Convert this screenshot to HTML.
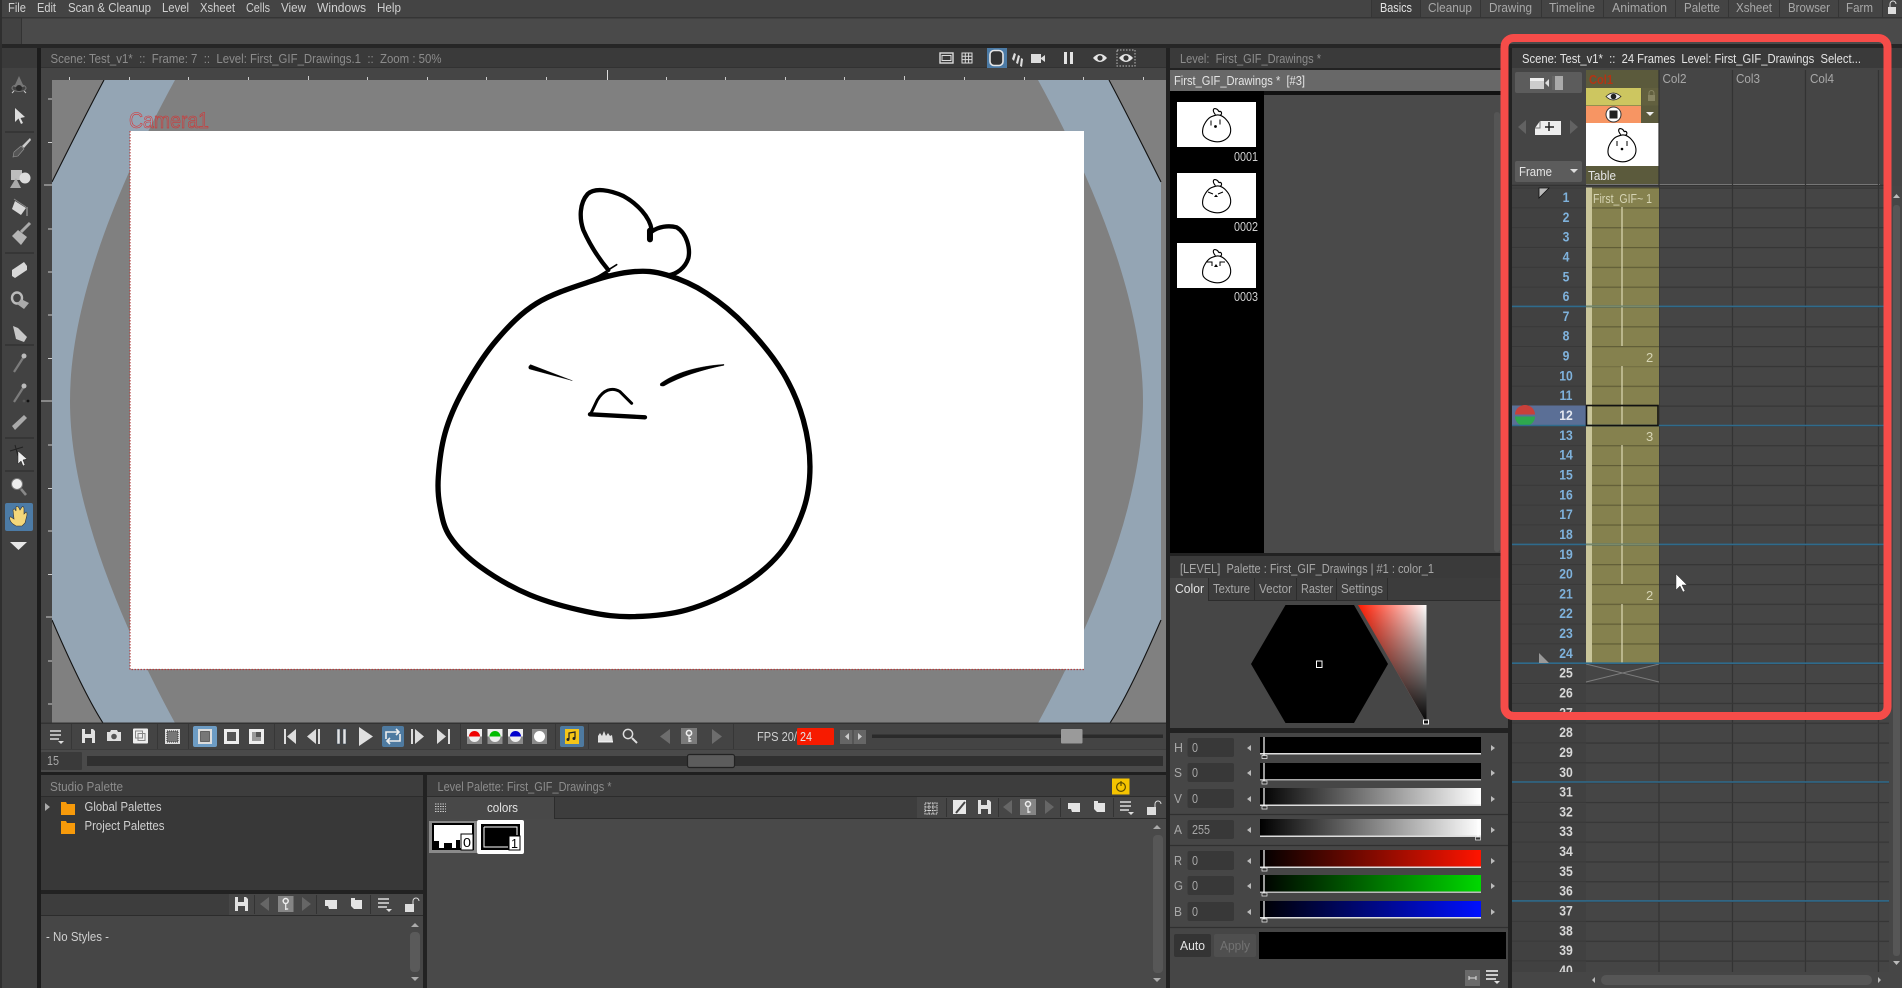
<!DOCTYPE html>
<html><head><meta charset="utf-8"><title>OpenToonz</title>
<style>
html,body{margin:0;padding:0;background:#464646;width:1902px;height:988px;overflow:hidden}
svg{display:block;position:absolute;left:0;top:0}
text{font-family:"Liberation Sans",sans-serif;font-size:13px;white-space:pre}
.m{fill:#d0d0d0}.d{fill:#8c8c8c}.w{fill:#e4e4e4}.t{fill:#a8a8a8}
.nb{font-weight:bold;fill:#7fb2dc;font-size:14px;text-anchor:middle}
.nw{font-weight:bold;fill:#d8d8d8;font-size:14px;text-anchor:middle}
.i{fill:#e2e2e2}.s{fill:none;stroke:#e2e2e2;stroke-width:1.6}
</style></head><body>
<svg width="1902" height="988" viewBox="0 0 1902 988" xmlns="http://www.w3.org/2000/svg">
<defs>
<pattern id="rows" x="1586" y="187.5" width="20" height="19.82" patternUnits="userSpaceOnUse"><rect width="20" height="1.2" fill="#353535"/></pattern>
<pattern id="rowsC" x="1586" y="187.5" width="20" height="19.82" patternUnits="userSpaceOnUse"><rect width="20" height="1.2" fill="#5f5c36"/></pattern>
<pattern id="rowsN" x="1512" y="187.5" width="20" height="19.82" patternUnits="userSpaceOnUse"><rect width="20" height="1" fill="#383838"/></pattern>
<linearGradient id="gw"><stop offset="0" stop-color="#000"/><stop offset="1" stop-color="#fff"/></linearGradient>
<linearGradient id="gr"><stop offset="0" stop-color="#000"/><stop offset="1" stop-color="#ff1400"/></linearGradient>
<linearGradient id="gg"><stop offset="0" stop-color="#000"/><stop offset="1" stop-color="#00d800"/></linearGradient>
<linearGradient id="gb"><stop offset="0" stop-color="#000"/><stop offset="1" stop-color="#0010ff"/></linearGradient>
<linearGradient id="tr"><stop offset="0" stop-color="#ff1a00"/><stop offset="1" stop-color="#fff"/></linearGradient>
<linearGradient id="tb" x1="0" y1="0" x2="0" y2="1"><stop offset="0" stop-color="#000" stop-opacity="0"/><stop offset="1" stop-color="#000"/></linearGradient>
<clipPath id="cv"><rect x="52" y="80" width="1114" height="643"/></clipPath>
<path id="body" d="M510 335 C558 319 602 308 640 305 C678 302 703 304 740 315 C777 326 820 344 860 370 C900 396 942 430 980 470 C1018 510 1062 563 1090 610 C1118 657 1137 703 1150 750 C1163 797 1170 845 1170 890 C1170 935 1165 977 1150 1020 C1135 1063 1112 1112 1080 1150 C1048 1188 1007 1222 960 1250 C913 1278 853 1305 800 1320 C747 1335 690 1339 640 1340 C590 1341 552 1336 500 1325 C448 1314 383 1297 330 1275 C277 1253 220 1219 180 1190 C140 1161 110 1130 90 1100 C70 1070 66 1040 60 1010 C54 980 52.5 957 55 920 C57.5 883 63 833 75 790 C87 747 104 707 130 660 C156 613 193 553 230 510 C267 467 303 429 350 400 C397 371 462 351 510 335 Z"/>
<path id="tuft" d="M565 300 C540 270 510 225 490 180 C478 145 478 100 503 72 C525 52 570 60 610 78 C650 100 690 140 695 180 M695 185 C715 170 745 165 770 172 C800 190 812 235 805 265 C795 295 770 312 745 316"/>
<path id="band" d="M104 80 L175 80 C120 180 70 300 70 401 C70 502 120 622 175 723 L103 723 C85 695 65 650 52 620 L52 182 C68 150 88 110 104 80 Z"/>
<path id="bline" d="M104 80 C88 110 68 150 52 182 M52 620 C65 650 85 695 103 723"/>
<g id="egg1" fill="none" stroke="#000" stroke-width="44" transform="translate(1201.2,107) scale(.0252,.026)"><use href="#body"/><use href="#tuft"/></g>
<path id="floppy" d="M-6 -7 H5 L7 -5 V7 H-6 Z M-3 -7 V-2 H3 V-7 Z M-3 2 V7 H4 V2 Z" fill-rule="evenodd"/>
</defs>

<!-- base -->
<rect width="1902" height="988" fill="#464646"/>
<rect y="0" width="1902" height="17" fill="#444"/>
<rect y="17" width="1902" height="1.5" fill="#353535"/>
<rect y="18.5" width="1902" height="25.5" fill="#4a4a4a"/>
<rect x="2" y="18.5" width="19" height="25.5" fill="#424242"/>
<rect y="44" width="1902" height="4" fill="#262626"/>
<rect x="0" y="0" width="2" height="988" fill="#2f2f2f"/>
<rect x="21" y="18" width="1" height="26" fill="#333"/>

<!-- menu -->
<text class="m" x="8" y="12" textLength="18" lengthAdjust="spacingAndGlyphs">File</text>
<text class="m" x="37" y="12" textLength="19" lengthAdjust="spacingAndGlyphs">Edit</text>
<text class="m" x="68" y="12" textLength="83" lengthAdjust="spacingAndGlyphs">Scan &amp; Cleanup</text>
<text class="m" x="162" y="12" textLength="27" lengthAdjust="spacingAndGlyphs">Level</text>
<text class="m" x="200" y="12" textLength="35" lengthAdjust="spacingAndGlyphs">Xsheet</text>
<text class="m" x="246" y="12" textLength="24" lengthAdjust="spacingAndGlyphs">Cells</text>
<text class="m" x="281" y="12" textLength="25" lengthAdjust="spacingAndGlyphs">View</text>
<text class="m" x="317" y="12" textLength="49" lengthAdjust="spacingAndGlyphs">Windows</text>
<text class="m" x="377" y="12" textLength="24" lengthAdjust="spacingAndGlyphs">Help</text>

<!-- workspace tabs -->
<rect x="1372" y="0" width="48" height="17" fill="#3d3d3d"/>
<path d="M1371.5 0V17M1420.5 0V17M1480.5 0V17M1541.5 0V17M1603.5 0V17M1675.5 0V17M1728.5 0V17M1779.5 0V17M1838.5 0V17M1882.5 0V17" stroke="#353535"/>
<text class="w" x="1380" y="12" textLength="32" lengthAdjust="spacingAndGlyphs">Basics</text>
<text class="t" x="1428" y="12" textLength="44" lengthAdjust="spacingAndGlyphs">Cleanup</text>
<text class="t" x="1489" y="12" textLength="43" lengthAdjust="spacingAndGlyphs">Drawing</text>
<text class="t" x="1549" y="12" textLength="46" lengthAdjust="spacingAndGlyphs">Timeline</text>
<text class="t" x="1612" y="12" textLength="55" lengthAdjust="spacingAndGlyphs">Animation</text>
<text class="t" x="1684" y="12" textLength="36" lengthAdjust="spacingAndGlyphs">Palette</text>
<text class="t" x="1736" y="12" textLength="36" lengthAdjust="spacingAndGlyphs">Xsheet</text>
<text class="t" x="1788" y="12" textLength="42" lengthAdjust="spacingAndGlyphs">Browser</text>
<text class="t" x="1846" y="12" textLength="27" lengthAdjust="spacingAndGlyphs">Farm</text>
<rect x="1888" y="7" width="8" height="7" fill="#ddd"/><path d="M1890 7V4a3 3 0 0 1 6 0" fill="none" stroke="#ddd"/>

<!-- left toolbar -->
<rect x="2" y="48" width="35" height="940" fill="#424242"/>
<rect x="37" y="48" width="4" height="940" fill="#1c1c1c"/>
<rect x="2" y="48" width="35" height="20" fill="#3a3a3a"/>
<path d="M5 132H34M5 253H34M5 345H34M5 438H34M5 471H34" stroke="#333" stroke-width="1.5"/>
<g>
<path d="M19 76 L14 87 H24 Z" fill="#777"/><ellipse cx="19" cy="88" rx="7" ry="3.5" fill="none" stroke="#777"/><circle cx="19" cy="88" r="3" fill="#2a2a2a"/><path d="M12 93l2-2M26 93l-2-2" stroke="#ccc"/>
<path d="M15 108 L15 122 L18.5 118.5 L21 124 L23 123 L20.5 118 L25 117 Z" fill="#ddd"/>
<path d="M30 138 L22 146 L24 148 L31 140 Z" fill="#ccc"/><path d="M21 146 L14 152 L13 157 L18 156 L24 149 Z" fill="#555" stroke="#999" stroke-width=".6"/>
<rect x="11" y="170" width="11" height="10" fill="#bdbdbd"/><circle cx="25" cy="178" r="5.5" fill="#dcdcdc"/><path d="M10 188 L16 178 L21 188 Z" fill="#aaa"/>
<path d="M15 201 L26 208 L21 215 L12 209 Z" fill="#d8d8d8"/><path d="M14 199 L26 207" stroke="#888"/><path d="M27 207 V216" stroke="#777" stroke-width="2"/>
<path d="M12 236 L21 245 L27 237 L18 230 Z" fill="#b5b5b5"/><path d="M21 232 L30 223" stroke="#aaa" stroke-width="3"/>
<path d="M12 270 L24 262 L27 266 L27 270 L15 278 L12 276 Z" fill="#d8d8d8"/>
<ellipse cx="17" cy="298" rx="5" ry="5.5" fill="none" stroke="#bbb" stroke-width="2.4"/><path d="M21 299 L29 303 L24 309 L17 304 Z" fill="#aaa"/>
<path d="M13 326 L18 328 L27 337 L24 342 L16 339 Z" fill="#c8c8c8"/>
<path d="M14 372 L23 358" stroke="#7c7c7c" stroke-width="2.2"/><circle cx="24" cy="356" r="2.5" fill="#bbb"/>
<path d="M14 402 L23 388" stroke="#7c7c7c" stroke-width="2.2"/><circle cx="24" cy="386" r="2.5" fill="#bbb"/><circle cx="24" cy="401" r="1.4" fill="#555"/><circle cx="28" cy="401" r="1.4" fill="#111"/>
<path d="M12 426 L24 415 L27 418 L15 430 Z" fill="#aaa"/>
<path d="M10 451 L23 447 M15 445 L18 456" stroke="#222" stroke-width="1"/><path d="M18 451 L18 464 L21 461 L23 466 L25 465 L23 460 L27 459 Z" fill="#eee" stroke="#222" stroke-width=".5"/>
<circle cx="17" cy="484" r="5.5" fill="#eee" stroke="#777"/><path d="M21 489 L26 495" stroke="#888" stroke-width="2.6"/>
<rect x="5" y="503" width="28" height="28" rx="2" fill="#4c7ba6"/>
<path d="M13 524 C9 521 9 516 11 517 L14 519 L13 510 C14 508 15 509 16 511 L16 507 C17 506 18 506 19 508 L20 510 L22 507 C23 506 24 507 24 509 L24 514 L26 512 C27 512 27 513 27 515 L25 523 L22 526 H16 Z" fill="#f3d77a" stroke="#333" stroke-width=".6"/>
<path d="M10 542 H27 L18.5 550 Z" fill="#e8e8e8"/>
</g>

<!-- viewer -->
<rect x="41" y="48" width="1125" height="20" fill="#3a3a3a"/>
<rect x="41" y="67.5" width="1125" height="1" fill="#2a2a2a"/>
<rect x="41" y="68" width="1125" height="12" fill="#454545"/>
<rect x="41" y="80" width="11" height="643" fill="#454545"/>
<text class="d" x="50.5" y="63" textLength="391" lengthAdjust="spacingAndGlyphs">Scene: Test_v1*  ::  Frame: 7  ::  Level: First_GIF_Drawings.1  ::  Zoom : 50%</text>
<path d="M69.5 77V80M129.5 77V80M188.5 77V80M248.5 77V80M308.5 76V80M367.5 77V80M427.5 77V80M486.5 77V80M546.5 77V80M666.5 77V80M725.5 77V80M785.5 77V80M844.5 77V80M904.5 76V80M964.5 77V80M1024.5 77V80M1083.5 77V80M1143.5 77V80" stroke="#ccc"/>
<path d="M607.5 70V80" stroke="#ddd"/>
<path d="M48 99H52M48 142.5H52M44 185H52M48 229H52M48 272H52M48 315H52M48 358.5H52M41 401H52M48 445H52M48 488.5H52M48 531H52M48 574.5H52M46 617H52M48 661H52M48 704H52" stroke="#ccc"/>
<rect x="52" y="80" width="1114" height="643" fill="#808080"/>
<g clip-path="url(#cv)">
<use href="#band" fill="#94a5b4"/>
<use href="#band" fill="#94a5b4" transform="matrix(-1 0 0 1 1213 0)"/>
<use href="#bline" fill="none" stroke="#111" stroke-width="1.1"/>
<use href="#bline" fill="none" stroke="#111" stroke-width="1.1" transform="matrix(-1 0 0 1 1213 0)"/>
</g>
<rect x="130" y="131" width="954" height="538" fill="#fff"/>
<path d="M130 131V669.5H1084" fill="none" stroke="#b3403f" stroke-width="1.2" stroke-dasharray="1.5 1.5"/>
<text x="129" y="128" textLength="80" lengthAdjust="spacingAndGlyphs" fill="none" stroke="#e02a2a" stroke-width=".55" style="font-size:22px">Camera1</text>
<g transform="translate(420,170) scale(.3333)" fill="none" stroke="#000" stroke-linecap="round" stroke-linejoin="round">
<use href="#body" stroke-width="16"/>
<use href="#tuft" stroke-width="13"/>
<path d="M690 182 L690 208" stroke-width="18"/>
<path d="M512 333 L590 284" stroke-width="5"/>
<path d="M512 333 L560 312" stroke-width="13"/>
<path d="M332 584 L457 632 L328 597 Q322 590 332 584Z" fill="#000" stroke-width="1"/>
<path d="M722 640 C770 605 840 588 912 583 L912 586 C850 598 780 620 732 648 Q716 650 722 640 Z" fill="#000" stroke-width="1"/>
<path d="M512 732 L532 690 C550 660 575 650 600 665 L635 700" stroke-width="9"/>
<path d="M510 733 L675 742" stroke-width="13"/>
</g>
<!-- viewer title icons -->
<g>
<rect x="987" y="48" width="20" height="20" fill="#4c7ba6"/>
<rect x="940" y="53" width="13" height="10" fill="none" stroke="#ddd" stroke-width="1.4"/><rect x="942" y="55.5" width="9" height="5" fill="none" stroke="#ddd"/>
<path d="M962 53h10v10h-10zM965.3 53v10M968.6 53v10M962 56.3h10M962 59.6h10" fill="none" stroke="#ddd"/>
<rect x="990" y="50.5" width="13" height="15" rx="4" fill="#333" stroke="#e6e6e6" stroke-width="1.6"/>
<path d="M1012 59l2-6 2 1-2 7zM1016 63l2-8 2 1-2 8zM1020 66l1-8 2 1-1 8z" fill="#ddd"/>
<rect x="1031" y="54" width="10" height="9" fill="#ddd"/><path d="M1041 58l4-3v7l-4-3z" fill="#ddd"/>
<rect x="1064" y="52" width="3" height="12" fill="#e4e4e4"/><rect x="1070" y="52" width="3" height="12" fill="#e4e4e4"/>
<path d="M1093 58q7-8 14 0q-7 8-14 0z" fill="#e4e4e4"/><circle cx="1100" cy="58" r="2.6" fill="#333"/>
<rect x="1117" y="50" width="18" height="16" fill="none" stroke="#bbb" stroke-dasharray="1.5 1.5"/>
<path d="M1119 58q7-8 14 0q-7 8-14 0z" fill="#e4e4e4"/><circle cx="1126" cy="58" r="2.6" fill="#333"/>
</g>

<!-- playback bar -->
<rect x="41" y="723" width="1125" height="27" fill="#444"/>
<rect x="41" y="722.5" width="1125" height="1.5" fill="#333"/>
<rect x="41" y="749.5" width="1125" height="1" fill="#333"/>
<rect x="41" y="750" width="1125" height="22" fill="#4a4a4a"/>
<rect x="41" y="772" width="1125" height="3.5" fill="#1f1f1f"/>
<path d="M71.5 724V749M157.5 724V749M188.5 724V749M274.5 724V749M460.5 724V749M555.5 724V749M588.5 724V749M733.5 724V749" stroke="#373737"/>
<g>
<path d="M50 731h11M50 735h11M50 739h9" stroke="#ddd" stroke-width="1.6"/><path d="M58 741h6l-3 3z" fill="#ddd"/>
<use href="#floppy" class="i" transform="translate(88,736)"/>
<path d="M107 732h3l1-2h6l1 2h3v9h-14z" fill="#e0e0e0"/><circle cx="114" cy="736.5" r="2.8" fill="#555"/>
<rect x="133" y="728.5" width="15" height="15" rx="1" fill="#eee"/><rect x="135.5" y="731" width="7" height="7" fill="none" stroke="#888"/><rect x="138" y="733.5" width="7" height="7" fill="none" stroke="#888"/>
<rect x="165" y="729" width="15" height="15" fill="#ddd"/><rect x="167" y="731" width="11" height="11" fill="#777" stroke="#333" stroke-dasharray="1 1"/>
<rect x="193" y="726" width="24" height="21" rx="2" fill="#6d9cc4"/><rect x="198" y="729" width="14" height="15" fill="#ddd"/><rect x="200.5" y="731.5" width="9" height="10" fill="#777" stroke="#333" stroke-width=".6"/>
<rect x="224" y="729" width="15" height="15" fill="#eee"/><rect x="227" y="732" width="9" height="9" fill="#555"/>
<rect x="249" y="729" width="15" height="15" fill="#eee"/><rect x="252" y="732" width="9" height="9" fill="#999"/><rect x="256" y="732" width="5" height="5" fill="#555"/>
<path d="M284 729h2v15h-2zM296 729v15l-9-7.5z" fill="#ddd"/>
<path d="M320 729v15h-2v-15zM316 729v15l-9-7.5z" fill="#ddd"/>
<rect x="337" y="729" width="3" height="15" fill="#e4e4e4" stroke="#345" stroke-width=".5"/><rect x="343" y="729" width="3" height="15" fill="#e4e4e4" stroke="#345" stroke-width=".5"/>
<path d="M359 727v19l14-9.5z" fill="#e0e0e0"/>
<rect x="382" y="726" width="22" height="21" rx="2" fill="#4e7aa0"/>
<path d="M386 739v-7h12M396 729l3 3-3 3M400 734v7h-12M390 744l-3-3 3-3" fill="none" stroke="#eee" stroke-width="1.6"/>
<path d="M411 729h2v15h-2zM415 729v15l9-7.5z" fill="#ddd"/>
<path d="M437 729v15l9-7.5zM448 729h2v15h-2z" fill="#ddd"/>
<rect x="467" y="729" width="15" height="15" fill="#8a8a8a"/><rect x="467" y="729" width="15" height="7.5" fill="#eee"/><path d="M469 736.5a5.5 5.5 0 0 1 11 0z" fill="#e00"/><path d="M469 736.5a5.5 5.5 0 0 0 11 0z" fill="#eee"/>
<rect x="487.5" y="729" width="15" height="15" fill="#8a8a8a"/><rect x="487.5" y="729" width="15" height="7.5" fill="#eee"/><path d="M489.5 736.5a5.5 5.5 0 0 1 11 0z" fill="#0b0"/><path d="M489.5 736.5a5.5 5.5 0 0 0 11 0z" fill="#eee"/>
<rect x="508" y="729" width="15" height="15" fill="#8a8a8a"/><rect x="508" y="729" width="15" height="7.5" fill="#eee"/><path d="M510 736.5a5.5 5.5 0 0 1 11 0z" fill="#00c"/><path d="M510 736.5a5.5 5.5 0 0 0 11 0z" fill="#eee"/>
<rect x="532" y="729" width="15" height="15" fill="#8a8a8a"/><circle cx="539.5" cy="736.5" r="5.5" fill="#fff"/>
<rect x="560" y="726" width="24" height="21" rx="2" fill="#4e7aa0"/><rect x="565" y="729" width="14" height="15" fill="#f5c518"/>
<path d="M569 739v-6l6-1v6" fill="none" stroke="#222" stroke-width="1.2"/><circle cx="568" cy="739.5" r="1.5" fill="#222"/><circle cx="574" cy="738.5" r="1.5" fill="#222"/>
<path d="M598 742V736l2-3 2 3 2-5 2 5 2-3 2 3 2-1 1 7z" fill="#e0e0e0"/><rect x="598" y="741" width="15" height="1.5" fill="#eee"/>
<circle cx="628" cy="734" r="4.6" fill="none" stroke="#ddd" stroke-width="1.5"/><path d="M632 738l5 5" stroke="#ddd" stroke-width="2"/>
<path d="M670 729v15l-10-7.5z" fill="#6d6d6d"/>
<rect x="681" y="728" width="16" height="16" fill="#7a7a7a"/><circle cx="689" cy="733" r="2.6" fill="none" stroke="#eee" stroke-width="1.6"/><path d="M689 735.5V742M689 741h2.5M689 738.5h2" stroke="#eee" stroke-width="1.2"/>
<path d="M712 729v15l10-7.5z" fill="#6d6d6d"/>
<text class="m" x="757" y="741" textLength="40" lengthAdjust="spacingAndGlyphs">FPS 20/</text>
<rect x="797" y="728" width="37" height="17" rx="1" fill="#f71b00"/>
<text class="w" x="800" y="741" textLength="12" lengthAdjust="spacingAndGlyphs">24</text>
<rect x="840" y="730" width="12.5" height="14" fill="#666"/><rect x="853.5" y="730" width="12.5" height="14" fill="#666"/>
<path d="M849 733v7l-4-3.5zM858 733v7l4-3.5z" fill="#ccc"/>
<rect x="872" y="734.5" width="291" height="3.5" fill="#2a2a2a"/>
<rect x="1061" y="729" width="21.5" height="14.5" rx="1" fill="#9a9a9a"/>
<rect x="41" y="752" width="41" height="18" rx="1" fill="#3a3a3a"/>
<text class="t" x="47" y="765" textLength="12" lengthAdjust="spacingAndGlyphs">15</text>
<rect x="87" y="756" width="1076" height="10" fill="#303030"/>
<rect x="687.5" y="754.5" width="47" height="13" rx="2" fill="#5c5c5c" stroke="#222" stroke-width="1.2"/>
</g>

<!-- Studio palette -->
<rect x="41" y="775" width="382" height="22" fill="#3d3d3d"/>
<rect x="423" y="775" width="4" height="213" fill="#222"/>
<rect x="41" y="796" width="382" height="1" fill="#2c2c2c"/>
<text class="d" x="50" y="791" textLength="73" lengthAdjust="spacingAndGlyphs">Studio Palette</text>
<rect x="41" y="797" width="382" height="93" fill="#383838"/>
<path d="M45 803l5 4-5 4z" fill="#aaa"/>
<path d="M61 802h5l1 2h8v11h-14z" fill="#f79a0a"/>
<path d="M61 821h5l1 2h8v11h-14z" fill="#f79a0a"/>
<text class="m" x="84.5" y="811" textLength="77" lengthAdjust="spacingAndGlyphs">Global Palettes</text>
<text class="m" x="84.5" y="830" textLength="80" lengthAdjust="spacingAndGlyphs">Project Palettes</text>
<rect x="41" y="890" width="382" height="4" fill="#222"/>
<rect x="41" y="894" width="382" height="21" fill="#3d3d3d"/>
<rect x="229" y="894" width="194" height="21" fill="#464646"/>
<path d="M254.5 895V914M316.5 895V914M370.5 895V914" stroke="#333"/>
<rect x="41" y="915" width="382" height="1" fill="#2c2c2c"/>
<rect x="41" y="916" width="382" height="72" fill="#464646"/>
<g>
<use href="#floppy" class="i" transform="translate(241,904)"/>
<path d="M269 897v14l-9-7z" fill="#666"/>
<rect x="278" y="896" width="15.5" height="16" fill="#858585"/><circle cx="285.7" cy="901" r="2.5" fill="none" stroke="#eee" stroke-width="1.5"/><path d="M285.7 903.5V910M285.7 909h2.5" stroke="#eee" stroke-width="1.2"/>
<path d="M302 897v14l9-7z" fill="#666"/>
<path d="M325 900h12v9h-8l-1-3h-3z" fill="#e4e4e4"/>
<path d="M351 898h4v2h7v9h-8l-3-3z" fill="#e4e4e4"/>
<path d="M378 899h11M378 903h11M378 907h9" stroke="#ddd" stroke-width="1.6"/><path d="M386 909h6l-3 3z" fill="#ddd"/>
<rect x="405" y="904" width="9" height="8" fill="#ddd"/><path d="M413 904v-3a3 3 0 0 1 6 0" fill="none" stroke="#ddd"/>
</g>
<text class="m" x="46" y="941" textLength="63" lengthAdjust="spacingAndGlyphs">- No Styles -</text>
<path d="M411 927l4-4 4 4zM411 977l4 4 4-4z" fill="#aaa"/>
<rect x="410" y="932" width="10" height="40" rx="4" fill="#5a5a5a"/>

<!-- Level palette -->
<rect x="427" y="775" width="739" height="22" fill="#3d3d3d"/>
<rect x="427" y="796" width="739" height="1" fill="#2c2c2c"/>
<text class="d" x="437.5" y="791" textLength="174" lengthAdjust="spacingAndGlyphs">Level Palette: First_GIF_Drawings *</text>
<rect x="1112" y="778.5" width="17.5" height="16" fill="#f5c400"/>
<circle cx="1121" cy="787" r="4.4" fill="none" stroke="#5a4a00" stroke-width="1.2"/><path d="M1121 781v5" stroke="#5a4a00" stroke-width="1.2"/>
<rect x="427" y="797" width="739" height="21" fill="#3d3d3d"/>
<rect x="917" y="797" width="249" height="21" fill="#464646"/>
<rect x="427" y="797" width="127" height="22" fill="#484848"/>
<path d="M554.5 797V818M554 818.5H1166" stroke="#2c2c2c"/>
<path d="M435 804h11M435 806.5h11M435 809h11M435 811.5h11" stroke="#ccc" stroke-dasharray="1.5 1"/>
<text class="w" x="487" y="812" textLength="31" lengthAdjust="spacingAndGlyphs">colors</text>
<rect x="427" y="819" width="739" height="169" fill="#494949"/>
<path d="M946.5 798V817M998.5 798V817M1060.5 798V817M1113.5 798V817" stroke="#333"/>
<g>
<path d="M925 803h12v11h-12zM929 803v11M933 803v11M925 807h12M925 810.5h12" fill="none" stroke="#ddd" stroke-dasharray="1.5 .8"/>
<path d="M953 800h13v14h-13z" fill="#e8e8e8"/><path d="M956 813l9-11" stroke="#444" stroke-width="2"/>
<use href="#floppy" class="i" transform="translate(984,807)"/>
<path d="M1012 800v14l-9-7z" fill="#666"/>
<rect x="1020" y="799" width="16" height="16" fill="#858585"/><circle cx="1028" cy="804" r="2.5" fill="none" stroke="#eee" stroke-width="1.5"/><path d="M1028 806.5V813M1028 812h2.5" stroke="#eee" stroke-width="1.2"/>
<path d="M1045 800v14l9-7z" fill="#666"/>
<path d="M1068 803h12v9h-8l-1-3h-3z" fill="#e4e4e4"/>
<path d="M1094 801h4v2h7v9h-8l-3-3z" fill="#e4e4e4"/>
<path d="M1120 802h11M1120 806h11M1120 810h9" stroke="#ddd" stroke-width="1.6"/><path d="M1128 812h6l-3 3z" fill="#ddd"/>
<rect x="1147" y="807" width="9" height="8" fill="#ddd"/><path d="M1155 807v-3a3 3 0 0 1 6 0" fill="none" stroke="#ddd"/>
</g>
<path d="M1153 829l4-4 4 4zM1153 978l4 4 4-4z" fill="#aaa"/>
<rect x="1153" y="835" width="10" height="138" rx="4" fill="#575757"/>
<!-- chips -->
<rect x="429" y="821" width="48" height="32" fill="#8a8a8a"/>
<rect x="432" y="823" width="42" height="27" fill="#000"/>
<rect x="434" y="825" width="38" height="23" fill="#fff"/>
<path d="M434 841h5v7h-5zM444 843h8v5h-8z M456 840h4v8h-4z" fill="#000"/>
<rect x="461" y="834" width="12" height="16" fill="#fff" stroke="#000"/>
<text x="463" y="847" style="font-size:13px" fill="#000" textLength="8" lengthAdjust="spacingAndGlyphs">0</text>
<rect x="477" y="820" width="47" height="34" rx="2" fill="#fff"/>
<rect x="481" y="824" width="39" height="26" fill="#000"/>
<path d="M484 827H517V835M484 827V847H508" fill="none" stroke="#fff"/>
<rect x="509" y="836" width="11" height="14" fill="#fff" stroke="#000"/>
<text x="511" y="848" style="font-size:13px" fill="#000" textLength="7" lengthAdjust="spacingAndGlyphs">1</text>

<!-- level strip panel -->
<rect x="1166" y="48" width="4" height="940" fill="#222"/>
<rect x="1170" y="48" width="338" height="20" fill="#3a3a3a"/>
<rect x="1170" y="68" width="338" height="2" fill="#222"/>
<text class="d" x="1180" y="63" textLength="141" lengthAdjust="spacingAndGlyphs">Level:  First_GIF_Drawings *</text>
<rect x="1170" y="70" width="338" height="21" fill="#686868"/>
<text class="w" x="1174" y="85" textLength="131" lengthAdjust="spacingAndGlyphs">First_GIF_Drawings *  [#3]</text>
<rect x="1170" y="91" width="338" height="4" fill="#111"/>
<rect x="1170" y="91" width="94" height="462" fill="#000"/>
<rect x="1264" y="95" width="244" height="458" fill="#4a4a4a"/>
<rect x="1494" y="112" width="6" height="440" rx="3" fill="#555"/>
<rect x="1177" y="102" width="79" height="45" fill="#fff"/>
<rect x="1177" y="173" width="79" height="45" fill="#fff"/>
<rect x="1177" y="243" width="79" height="45" fill="#fff"/>
<use href="#egg1"/>
<path d="M1211 120.5v5M1220 119.5v5" stroke="#000"/><circle cx="1215.5" cy="126.5" r="1.4" fill="#000"/>
<use href="#egg1" transform="translate(0,71)"/>
<path d="M1208 192l5 2M1223 192l-5 2" stroke="#000"/><path d="M1214 197l2-2.5 2 2.5z" fill="#000"/>
<use href="#egg1" transform="translate(0,141)"/>
<path d="M1207 262h5v4M1225 262h-5v4" fill="none" stroke="#000"/><path d="M1214 267l2-3 2 3z" fill="#000"/>
<text class="m" x="1234" y="161" textLength="24" lengthAdjust="spacingAndGlyphs">0001</text>
<text class="m" x="1234" y="231" textLength="24" lengthAdjust="spacingAndGlyphs">0002</text>
<text class="m" x="1234" y="301" textLength="24" lengthAdjust="spacingAndGlyphs">0003</text>

<!-- color panel -->
<rect x="1170" y="553" width="338" height="3" fill="#222"/>
<rect x="1170" y="556" width="338" height="22" fill="#3a3a3a"/>
<text class="t" x="1180" y="573" textLength="254" lengthAdjust="spacingAndGlyphs">[LEVEL]  Palette : First_GIF_Drawings | #1 : color_1</text>
<rect x="1170" y="578" width="338" height="22" fill="#3c3c3c"/>
<rect x="1170" y="578" width="38" height="23" fill="#464646"/>
<path d="M1208.5 578V600M1254.5 578V600M1296.5 578V600M1336.5 578V600M1387.5 578V600M1208 600.5H1508" stroke="#2c2c2c"/>
<text class="w" x="1175" y="593" textLength="29" lengthAdjust="spacingAndGlyphs">Color</text>
<text class="t" x="1213" y="593" textLength="37" lengthAdjust="spacingAndGlyphs">Texture</text>
<text class="t" x="1259" y="593" textLength="33" lengthAdjust="spacingAndGlyphs">Vector</text>
<text class="t" x="1301" y="593" textLength="32" lengthAdjust="spacingAndGlyphs">Raster</text>
<text class="t" x="1341" y="593" textLength="42" lengthAdjust="spacingAndGlyphs">Settings</text>
<rect x="1170" y="601" width="338" height="127" fill="#464646"/>
<path d="M1285.5 605H1354L1388 664L1354 723H1285.5L1251 664Z" fill="#000"/>
<rect x="1316.5" y="661" width="5.5" height="6.5" fill="#000" stroke="#fff" stroke-width="1"/>
<path d="M1358 605H1426.5V723Z" fill="url(#tr)"/>
<path d="M1358 605H1426.5V723Z" fill="url(#tb)"/>
<rect x="1423.5" y="720" width="5" height="4" fill="#111" stroke="#fff"/>
<rect x="1170" y="728" width="338" height="5" fill="#222"/>
<rect x="1170" y="733" width="338" height="255" fill="#464646"/>
<path d="M1170 814.5H1508M1170 845.5H1508M1170 927.5H1508" stroke="#303030" stroke-width="1.2"/>
<g>
<rect x="1187.5" y="738" width="46.5" height="19" rx="2" fill="#383838"/>
<rect x="1187.5" y="763" width="46.5" height="19" rx="2" fill="#383838"/>
<rect x="1187.5" y="789" width="46.5" height="19" rx="2" fill="#383838"/>
<rect x="1187.5" y="820" width="46.5" height="19" rx="2" fill="#383838"/>
<rect x="1187.5" y="851" width="46.5" height="19" rx="2" fill="#383838"/>
<rect x="1187.5" y="876" width="46.5" height="19" rx="2" fill="#383838"/>
<rect x="1187.5" y="902" width="46.5" height="19" rx="2" fill="#383838"/>
<text class="t" x="1174" y="752" textLength="9" lengthAdjust="spacingAndGlyphs">H</text><text class="t" x="1174" y="777" textLength="8" lengthAdjust="spacingAndGlyphs">S</text><text class="t" x="1174" y="803" textLength="8" lengthAdjust="spacingAndGlyphs">V</text><text class="t" x="1174" y="834" textLength="8" lengthAdjust="spacingAndGlyphs">A</text><text class="t" x="1174" y="865" textLength="8" lengthAdjust="spacingAndGlyphs">R</text><text class="t" x="1174" y="890" textLength="9" lengthAdjust="spacingAndGlyphs">G</text><text class="t" x="1174" y="916" textLength="8" lengthAdjust="spacingAndGlyphs">B</text>
<text class="t" x="1192" y="752" textLength="6" lengthAdjust="spacingAndGlyphs">0</text><text class="t" x="1192" y="777" textLength="6" lengthAdjust="spacingAndGlyphs">0</text><text class="t" x="1192" y="803" textLength="6" lengthAdjust="spacingAndGlyphs">0</text><text class="t" x="1192" y="834" textLength="18" lengthAdjust="spacingAndGlyphs">255</text><text class="t" x="1192" y="865" textLength="6" lengthAdjust="spacingAndGlyphs">0</text><text class="t" x="1192" y="890" textLength="6" lengthAdjust="spacingAndGlyphs">0</text><text class="t" x="1192" y="916" textLength="6" lengthAdjust="spacingAndGlyphs">0</text>
<rect x="1260" y="737" width="221" height="17" fill="#000"/><rect x="1260" y="753" width="221" height="1.5" fill="#ddd"/>
<rect x="1260" y="763" width="221" height="17" fill="#000"/><rect x="1260" y="779" width="221" height="1.5" fill="#aaa"/>
<rect x="1260" y="788" width="221" height="17" fill="url(#gw)"/><rect x="1260" y="804.5" width="221" height="1.5" fill="#ddd"/>
<rect x="1260" y="819" width="221" height="17" fill="url(#gw)"/><rect x="1260" y="835.5" width="221" height="1.5" fill="#ddd"/>
<rect x="1260" y="850" width="221" height="17" fill="url(#gr)"/><rect x="1260" y="866.5" width="221" height="1.5" fill="#ddd"/>
<rect x="1260" y="875" width="221" height="17" fill="url(#gg)"/><rect x="1260" y="891.5" width="221" height="1.5" fill="#bbb"/>
<rect x="1260" y="901" width="221" height="17" fill="url(#gb)"/><rect x="1260" y="917" width="221" height="1.5" fill="#ddd"/>
<path d="M1264 737V756M1264 763V782M1264 788V807M1478 819V838M1264 850V869M1264 875V894M1264 901V920" stroke="#fff" stroke-width="1.2"/>
<path d="M1262 755.5h5v3h-5zM1262 781h5v3h-5zM1262 806h5v3h-5zM1475.5 837h5v3h-5zM1262 868h5v3h-5zM1262 893h5v3h-5zM1262 919h5v3h-5z" fill="#333" stroke="#eee" stroke-width=".7"/>
<path d="M1251 745v6l-4-3zM1251 770v6l-4-3zM1251 796v6l-4-3zM1251 827v6l-4-3zM1251 858v6l-4-3zM1251 883v6l-4-3zM1251 909v6l-4-3zM1491 745v6l4-3zM1491 770v6l4-3zM1491 796v6l4-3zM1491 827v6l4-3zM1491 858v6l4-3zM1491 883v6l4-3zM1491 909v6l4-3z" fill="#bbb"/>
<rect x="1174" y="934" width="37" height="23" rx="2" fill="#343434"/>
<text class="w" x="1180" y="950" textLength="25" lengthAdjust="spacingAndGlyphs">Auto</text>
<rect x="1214" y="934" width="42" height="23" rx="2" fill="#4f4f4f"/>
<text x="1220" y="950" fill="#737373" textLength="30" lengthAdjust="spacingAndGlyphs">Apply</text>
<rect x="1259" y="932" width="247" height="27" fill="#000"/>
<rect x="1465" y="970" width="15" height="16" fill="#6a6a6a"/><path d="M1469 978h7M1469 976v4M1476 976v4" stroke="#ddd"/>
<path d="M1486 971h12M1486 975h12M1486 979h10" stroke="#ddd" stroke-width="1.8"/><path d="M1494 981h6l-3 3z" fill="#ddd"/>
</g>

<!-- xsheet -->
<rect x="1508" y="48" width="4" height="940" fill="#222"/>
<rect x="1512" y="48" width="390" height="20" fill="#3a3a3a"/>
<rect x="1512" y="68" width="390" height="120" fill="#454545"/>
<rect x="1512" y="187.5" width="74" height="785" fill="#414141"/>
<rect x="1586" y="187.5" width="316" height="785" fill="#454545"/>
<rect x="1512" y="187.5" width="74" height="785" fill="url(#rowsN)"/>
<text class="w" x="1522" y="63" textLength="339" lengthAdjust="spacingAndGlyphs">Scene: Test_v1*  ::  24 Frames  Level: First_GIF_Drawings  Select...</text>
<rect x="1515" y="72" width="67" height="21" rx="2" fill="#5c5c5c"/>
<rect x="1530" y="78" width="14" height="11" fill="#ccc"/><rect x="1530" y="78" width="14" height="3" fill="#eee"/><path d="M1549 79v8l-4-4z" fill="#ddd"/>
<rect x="1552" y="76" width="11" height="14" fill="#aaa"/><rect x="1552" y="76" width="3" height="14" fill="#666"/>
<path d="M1526 120v14l-8-7zM1570 120v14l8-7z" fill="#626262"/>
<path d="M1535 128l5-7h21v14h-26z" fill="#eee"/><path d="M1549 122v9M1545 127h9" stroke="#222" stroke-width="1.5"/><path d="M1535 128h5v-7" fill="none" stroke="#777"/>
<rect x="1515" y="161" width="67" height="21" rx="2" fill="#5c5c5c"/>
<text class="w" x="1519" y="176" textLength="33" lengthAdjust="spacingAndGlyphs">Frame</text>
<path d="M1570 169h8l-4 4z" fill="#ddd"/>
<rect x="1586" y="70" width="73" height="115" fill="#5b5a3c"/>
<text x="1589" y="84" fill="#b23414" textLength="24" lengthAdjust="spacingAndGlyphs" font-weight="bold">Col1</text>
<rect x="1586" y="88" width="55" height="17.5" fill="#cdc660"/>
<rect x="1642" y="88" width="17" height="17.5" fill="#62603f"/>
<rect x="1648" y="95" width="7" height="6" fill="#888563"/><path d="M1649 95v-2a2.5 2.5 0 0 1 5 0v2" fill="none" stroke="#888563"/>
<path d="M1606 96.5q7-7 15 0q-8 7-15 0z" fill="#eee" stroke="#222" stroke-width=".8"/><circle cx="1613.5" cy="96.5" r="2.8" fill="#222"/>
<rect x="1586" y="106" width="55" height="17" fill="#f79563"/>
<circle cx="1613.5" cy="114.5" r="7.5" fill="#fff" stroke="#333" stroke-width="1"/><rect x="1609.5" y="110.5" width="8" height="8" fill="#222"/>
<path d="M1646 112h8l-4 4z" fill="#eee"/>
<rect x="1586" y="123" width="73" height="43" fill="#fff"/>
<g fill="none" stroke="#000" stroke-width="44" transform="translate(1606.6,127) scale(.0251,.026)"><use href="#body"/><use href="#tuft"/></g>
<path d="M1617 141v5M1627 141v5" stroke="#000"/><circle cx="1622" cy="149" r="1.3" fill="#000"/>
<text class="w" x="1588" y="180" textLength="28" lengthAdjust="spacingAndGlyphs">Table</text>
<rect x="1586" y="184" width="294" height="1.5" fill="#8c8c8c"/>
<path d="M1512 185.5H1890" stroke="#333" stroke-width="1.5"/>
<path d="M1659 70V972M1732.5 70V972M1805.5 70V972M1878.5 70V972" stroke="#333" stroke-width="1.2"/>
<text class="t" x="1662.5" y="83" textLength="24" lengthAdjust="spacingAndGlyphs">Col2</text>
<text class="t" x="1736" y="83" textLength="24" lengthAdjust="spacingAndGlyphs">Col3</text>
<text class="t" x="1810" y="83" textLength="24" lengthAdjust="spacingAndGlyphs">Col4</text>

<rect x="1586" y="187.5" width="73" height="476" fill="#85814e"/>
<rect x="1659" y="187.5" width="243" height="785" fill="url(#rows)"/>
<rect x="1586" y="663.5" width="73" height="309" fill="url(#rows)"/>
<rect x="1586" y="187.5" width="73" height="476" fill="url(#rowsC)"/>
<path d="M1586 365.5H1659" stroke="#85814e" stroke-width="2"/>
<rect x="1586" y="187.5" width="6" height="476" fill="#c9c59a"/>
<path d="M1622 207V346M1622 366V425M1622 445V584M1622 604V663" stroke="#ddd9b4" stroke-width="1.2"/>
<text x="1593" y="203" fill="#d6d4b4" textLength="59" lengthAdjust="spacingAndGlyphs">First_GIF~ 1</text>
<text x="1646" y="362" fill="#d6d4b4">2</text>
<text x="1646" y="441" fill="#d6d4b4">3</text>
<text x="1646" y="600" fill="#d6d4b4">2</text>
<path d="M1586 664L1659 682M1586 682L1659 664" stroke="#7c7c7c"/>
<rect x="1512" y="405.5" width="74" height="20" fill="#5b6f96"/>
<path d="M1515 414.5a10 9.5 0 0 1 20 0z" fill="#c8403a"/>
<path d="M1515 416.5a10 9.5 0 0 0 20 0z" fill="#2ea84e"/>
<path d="M1512 306.4H1890M1512 425.5H1890M1512 544.4H1890M1512 663.2H1890M1512 782H1890M1512 900.9H1890" stroke="#2f6b8c" stroke-width="1.6"/>
<path d="M1586 306.4H1659M1586 544.4H1659" stroke="#7a8a6a" stroke-width="1.4"/>
<rect x="1586.5" y="405.5" width="71.5" height="20" fill="none" stroke="#111" stroke-width="1.6"/>
<path d="M1539 198V188H1549Z" fill="#bbb" stroke="#111" stroke-width=".8"/>
<path d="M1539 653V663H1549Z" fill="#999"/>

<g transform="scale(.87,1)">
<text class="nb" x="1800" y="202">1</text><text class="nb" x="1800" y="221.8">2</text><text class="nb" x="1800" y="241.6">3</text><text class="nb" x="1800" y="261.5">4</text><text class="nb" x="1800" y="281.3">5</text><text class="nb" x="1800" y="301.1">6</text><text class="nb" x="1800" y="320.9">7</text><text class="nb" x="1800" y="340.7">8</text><text class="nb" x="1800" y="360.6">9</text><text class="nb" x="1800" y="380.4">10</text><text class="nb" x="1800" y="400.2">11</text><text class="nb" x="1800" y="420" style="fill:#e4e8f0">12</text><text class="nb" x="1800" y="439.8">13</text><text class="nb" x="1800" y="459.7">14</text><text class="nb" x="1800" y="479.5">15</text><text class="nb" x="1800" y="499.3">16</text><text class="nb" x="1800" y="519.1">17</text><text class="nb" x="1800" y="538.9">18</text><text class="nb" x="1800" y="558.8">19</text><text class="nb" x="1800" y="578.6">20</text><text class="nb" x="1800" y="598.4">21</text><text class="nb" x="1800" y="618.2">22</text><text class="nb" x="1800" y="638">23</text><text class="nb" x="1800" y="657.9">24</text>
<text class="nw" x="1800" y="677.7">25</text><text class="nw" x="1800" y="697.5">26</text><text class="nw" x="1800" y="717.3">27</text><text class="nw" x="1800" y="737.1">28</text><text class="nw" x="1800" y="757">29</text><text class="nw" x="1800" y="776.8">30</text><text class="nw" x="1800" y="796.6">31</text><text class="nw" x="1800" y="816.4">32</text><text class="nw" x="1800" y="836.2">33</text><text class="nw" x="1800" y="856.1">34</text><text class="nw" x="1800" y="875.9">35</text><text class="nw" x="1800" y="895.7">36</text><text class="nw" x="1800" y="915.5">37</text><text class="nw" x="1800" y="935.3">38</text><text class="nw" x="1800" y="955.2">39</text><text class="nw" x="1800" y="975">40</text>
</g>

<!-- xsheet scrollbars -->
<rect x="1512" y="972" width="390" height="16" fill="#464646"/>
<rect x="1889" y="186" width="13" height="786" fill="#464646"/>
<rect x="1893" y="205" width="7" height="751" rx="3" fill="#565656"/>
<path d="M1893 198l3.5-4 3.5 4zM1893 961l3.5 4 3.5-4z" fill="#bbb"/>
<rect x="1601" y="975" width="271" height="10" rx="5" fill="#565656"/>
<path d="M1595 977v6l-3-3zM1878 977v6l3-3z" fill="#bbb"/>
<path d="M1676 574 L1676 590 L1680 586 L1683 592 L1685 591 L1682 585 L1687 585 Z" fill="#fff" stroke="#333" stroke-width=".5"/>

<!-- red highlight -->
<rect x="1504.5" y="38" width="383" height="678" rx="9" fill="none" stroke="#f64c49" stroke-width="8"/>
</svg>
</body></html>
